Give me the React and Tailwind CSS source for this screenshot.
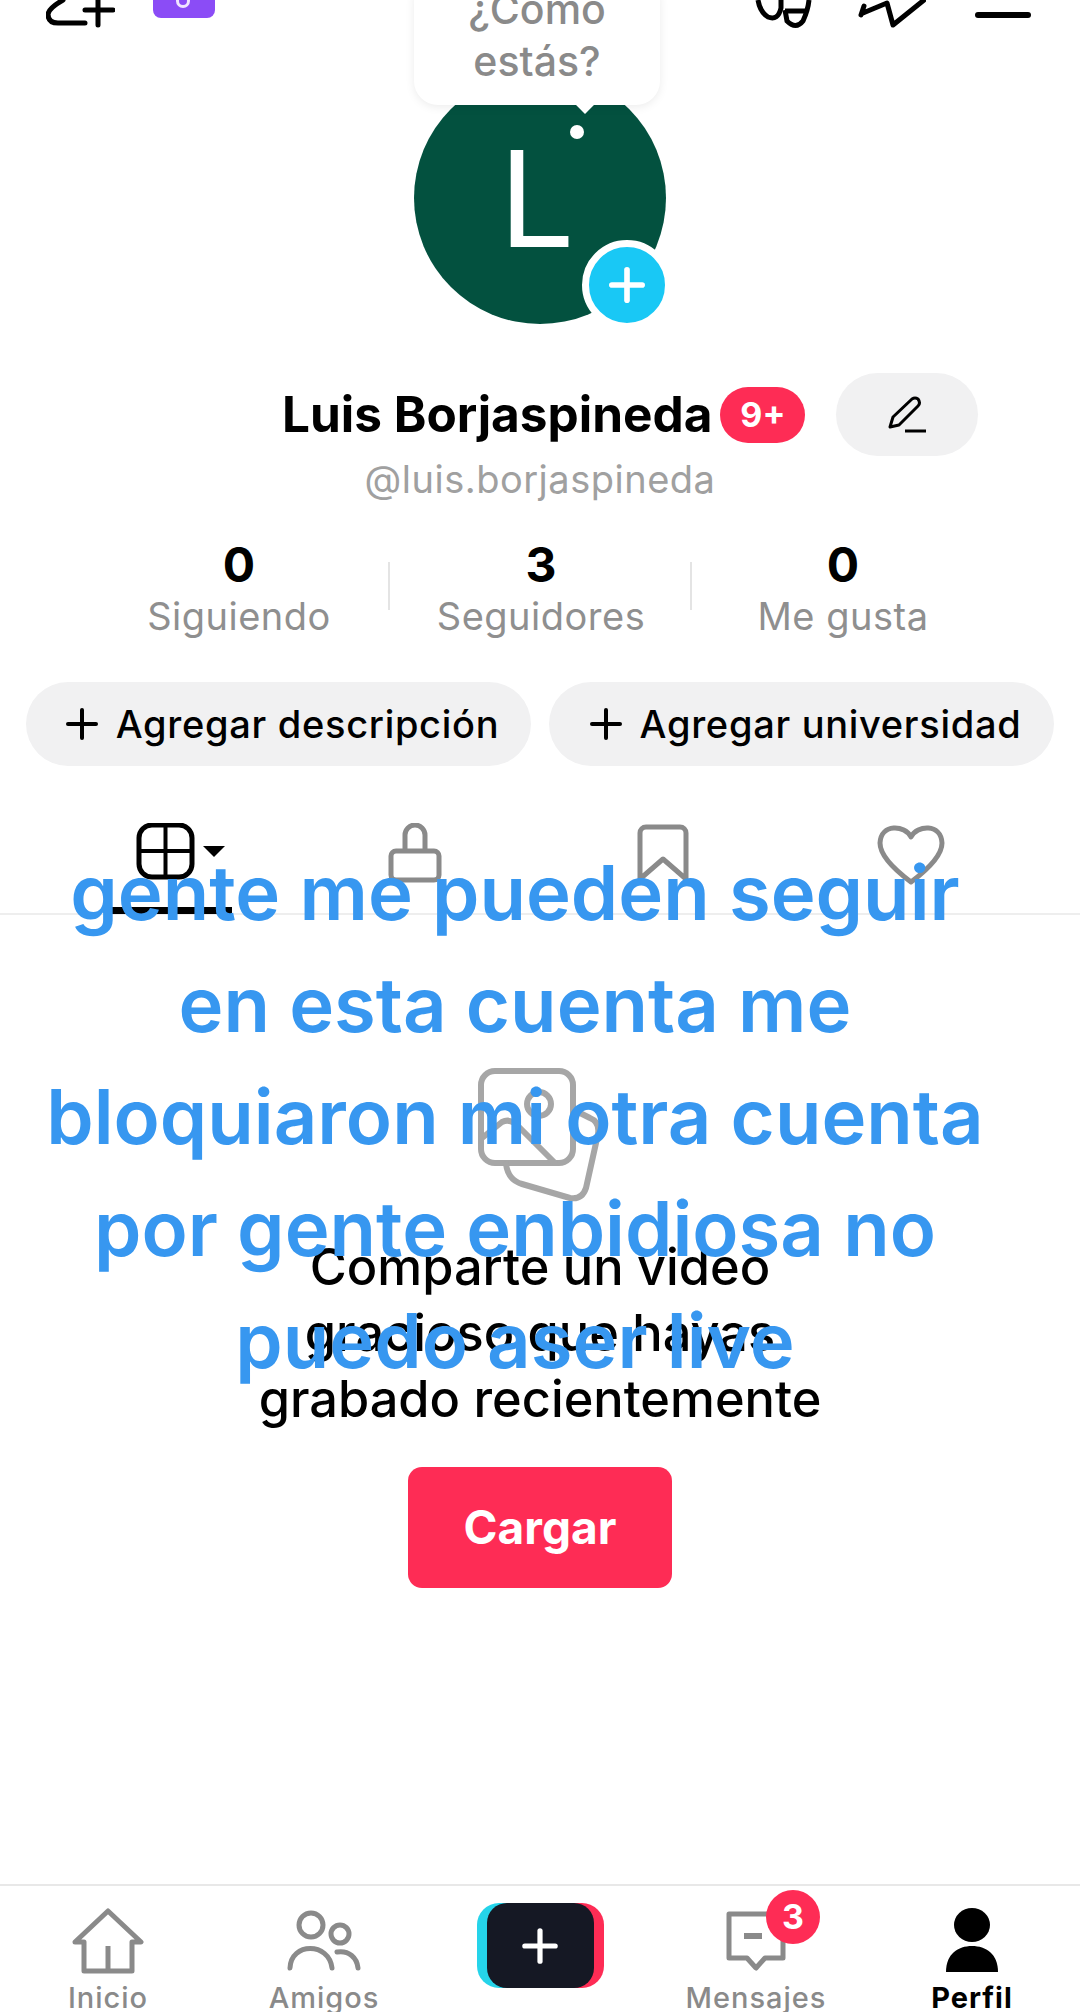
import { Plus } from "lucide-react";

const sans = "font-['Inter','Liberation_Sans',sans-serif]";

const stats = [
  { value: "0", label: "Siguiendo" },
  { value: "3", label: "Seguidores" },
  { value: "0", label: "Me gusta" },
];

const navGray = "#8a8a8a";

const TopIcons = () => (
  <div className="flex h-[40px] justify-between overflow-hidden pl-[46px] pr-[49px]">
    <div className="flex gap-[38px]">
      <svg width="69" height="28" viewBox="0 0 69 28" fill="none" stroke="#000" strokeWidth="5" strokeLinecap="round">
        <path d="M17 0Q3 8 2 14Q2 23 12 23H39" />
        <path d="M52 0V25M39 10H67" />
      </svg>
      <svg width="63" height="20" viewBox="0 0 63 20">
        <path d="M0 0H62V10a8 8 0 0 1-8 8H8a8 8 0 0 1-8-8Z" fill="#8b4cf6" />
        <circle cx="30" cy="1" r="5.5" fill="none" stroke="#f0e5ff" strokeWidth="3" />
      </svg>
    </div>
    <div className="flex">
      <svg width="58" height="30" viewBox="0 0 58 30" fill="none" stroke="#000" strokeWidth="5">
        <path d="M4 0Q6 12 14 17Q24 21 27 8L27 0" />
        <path d="M31 10L33 21Q42 30 49 21Q54 10 55 0" />
        <path d="M31 11H52" />
      </svg>
      <svg className="ml-[46px]" width="68" height="30" viewBox="0 0 68 30" fill="none" stroke="#000" strokeWidth="5" strokeLinejoin="round" strokeLinecap="round">
        <path d="M3 15L6 6M5 13L29 3L35 25L66 0" />
      </svg>
      <div className="ml-[49px] mt-[12px] h-[6px] w-[56px] rounded-full bg-black" />
    </div>
  </div>
);

const Avatar = () => (
  <div className="relative mx-auto mt-[32px] flex h-[252px] w-[252px] items-center justify-center rounded-full bg-[#03513f]">
    <span className="mr-[6px] text-[134px] font-normal leading-none text-white">L</span>
    <div className="absolute -bottom-[6px] -right-[6px] flex h-[90px] w-[90px] items-center justify-center rounded-full border-[7px] border-white bg-[#19c8f5]">
      <Plus size={52} color="#fff" strokeWidth={2.6} />
    </div>
    <div className="absolute left-[156px] top-[53px] h-[14px] w-[14px] rounded-full bg-white" />
  </div>
);

const Bubble = () => (
  <div className="absolute left-[414px] top-[-24px] z-10 flex h-[129px] w-[246px] flex-col items-center justify-end rounded-[24px] bg-white pb-[18px] text-[41px] font-medium leading-[52px] text-[#8a8a8a] shadow-[0_2px_10px_rgba(0,0,0,0.08)]">
    <span>¿Como</span>
    <span>estás?</span>
    <div className="absolute -bottom-[6px] left-[164px] h-[14px] w-[14px] rotate-45 bg-white" />
  </div>
);

const TabIcons = () => (
  <div className="mt-[57px] h-[92px] border-b-2 border-[#eeeeee] pl-[43px] pr-[45px]">
    <div className="grid grid-cols-4">
      <div className="flex justify-center">
        <svg className="ml-[10px]" width="120" height="92" viewBox="0 0 120 92" fill="none" stroke="#000">
          <rect x="27" y="2" width="53" height="52" rx="13" strokeWidth="5" />
          <path d="M53.5 2V54M27 28H80" strokeWidth="4" />
          <path d="M91 23H113L102 34Z" fill="#000" stroke="none" />
          <rect x="0" y="84" width="120" height="7" fill="#000" stroke="none" />
        </svg>
      </div>
      <div className="flex justify-center">
        <svg width="56" height="60" viewBox="0 0 56 60" fill="none" stroke="#8a8a8a" strokeWidth="5">
          <path d="M18 28V12a10 10 0 0 1 20 0V28" />
          <rect x="4" y="28" width="48" height="29" rx="5" />
        </svg>
      </div>
      <div className="flex justify-center">
        <svg width="52" height="60" viewBox="0 0 52 60" fill="none" stroke="#8a8a8a" strokeWidth="5" strokeLinejoin="round">
          <path d="M3 56V10a6 6 0 0 1 6-6H43a6 6 0 0 1 6 6V56L26 36Z" />
        </svg>
      </div>
      <div className="flex justify-center">
        <svg width="68" height="62" viewBox="0 0 68 62" fill="none" stroke="#8a8a8a" strokeWidth="5" strokeLinejoin="round">
          <path d="M34 14C28 2 4 0 3 20C3 34 22 50 34 59C46 50 65 34 65 20C64 0 40 2 34 14Z" />
        </svg>
      </div>
    </div>
  </div>
);

const EmptyIcon = () => (
  <svg className="mx-auto" width="124" height="134" viewBox="0 0 124 134" fill="none" stroke="#a6a6a6" strokeWidth="6" strokeLinejoin="round" strokeLinecap="round">
    <rect x="3" y="3" width="92" height="92" rx="14" />
    <circle cx="61" cy="36" r="12" />
    <path d="M4 70L24 54Q32 50 40 58L76 94" />
    <path d="M28 96Q30 112 44 116L92 130Q104 132 108 120L120 66Q122 54 112 50L96 42" />
  </svg>
);

const NavItem = ({ label, active, children }) => (
  <div className="flex flex-col items-center">
    <div className="flex h-[81px] items-center justify-center">{children}</div>
    <span className={`text-[29px] leading-[34px] tracking-[1px] ${active ? "font-bold text-black" : "font-medium text-[#8a8a8a]"}`}>
      {label}
    </span>
  </div>
);

const BottomNav = () => (
  <div className="absolute inset-x-0 bottom-0 h-[128px] overflow-hidden border-t-2 border-[#e8e8e8] pt-[14px]">
    <div className="grid grid-cols-5">
      <NavItem label="Inicio">
        <svg width="72" height="66" viewBox="0 0 72 66" fill="none" stroke={navGray} strokeWidth="5" strokeLinejoin="round">
          <path d="M36 3L69 34H60V63H12V34H3Z" />
          <path d="M36 38V63" />
        </svg>
      </NavItem>
      <NavItem label="Amigos">
        <svg width="74" height="62" viewBox="0 0 74 62" fill="none" stroke={navGray} strokeWidth="5" strokeLinecap="round">
          <circle cx="24" cy="15" r="12" />
          <circle cx="53" cy="24" r="9" />
          <path d="M3 58C4 32 42 32 45 58" />
          <path d="M50 42C62 40 70 48 71 58" />
        </svg>
      </NavItem>
      <div className="relative mx-auto mt-[3px] h-[85px] w-[127px]">
        <div className="absolute inset-y-0 left-0 w-[60px] rounded-[22px] bg-[#25d4ea]" />
        <div className="absolute inset-y-0 right-0 w-[60px] rounded-[22px] bg-[#fe2c55]" />
        <div className="absolute inset-y-0 left-[10px] right-[10px] flex items-center justify-center rounded-[20px] bg-[#151824]">
          <Plus size={52} color="#fff" strokeWidth={2.4} />
        </div>
      </div>
      <NavItem label="Mensajes">
        <div className="relative h-[66px] w-[60px]">
          <svg width="60" height="66" viewBox="0 0 60 66" fill="none" stroke={navGray} strokeWidth="5" strokeLinejoin="round">
            <path d="M3 6H57V50H39L30 60L21 50H3Z" />
            <path d="M18 28H36" strokeWidth="6" />
          </svg>
          <div className="absolute -top-[18px] left-[40px] flex h-[54px] w-[54px] items-center justify-center rounded-full bg-[#fe2c55] text-[34px] font-bold text-white">
            3
          </div>
        </div>
      </NavItem>
      <NavItem label="Perfil" active>
        <svg width="56" height="66" viewBox="0 0 56 66">
          <ellipse cx="28" cy="17" rx="18" ry="17" fill="#000" />
          <path d="M2 64C2 46 14 38 28 38C42 38 54 46 54 64Z" fill="#000" />
        </svg>
      </NavItem>
    </div>
  </div>
);

export default function App() {
  return (
    <div className={`relative h-[2012px] w-[1080px] overflow-hidden bg-white ${sans}`}>
      <TopIcons />
      <Bubble />
      <Avatar />

      <div className="mt-[49px] flex items-center pl-[282px]">
        <span className="text-[49.5px] font-bold leading-[83px] text-black">Luis Borjaspineda</span>
        <span className="ml-[8px] flex h-[56px] w-[85px] items-center justify-center rounded-full bg-[#fe2c55] text-[34px] font-bold text-white">
          9+
        </span>
        <span className="ml-[31px] flex h-[83px] w-[142px] items-center justify-center rounded-full bg-[#f1f1f2]">
          <svg width="40" height="38" viewBox="0 0 40 38" fill="none" stroke="#000" strokeWidth="3" strokeLinejoin="round">
            <path d="M3 31L6 21L25 3Q28 1 31 3Q34 7 31 10L12 29Z" />
            <path d="M18 35H39" />
          </svg>
        </span>
      </div>

      <p className="mt-[1px] text-center text-[38px] leading-[44px] tracking-[0.5px] text-[#a0a0a0]">@luis.borjaspineda</p>

      <div className="mt-[37px] flex justify-center pl-[2px]">
        {stats.map((s, i) => (
          <div key={s.label} className="relative flex w-[302px] flex-col items-center">
            <span className="text-[48px] font-bold leading-[54px] text-black">{s.value}</span>
            <span className="text-[38px] leading-[48px] tracking-[0.5px] text-[#8f8f8f]">{s.label}</span>
            {i < 2 && <div className="absolute right-0 top-[24px] h-[48px] w-[2px] bg-[#e4e4e4]" />}
          </div>
        ))}
      </div>

      <div className="mt-[42px] flex gap-[18px] pl-[26px] pr-[26px]">
        {["Agregar descripción", "Agregar universidad"].map((t) => (
          <div key={t} className="flex h-[84px] flex-1 items-center justify-center gap-[10px] rounded-full bg-[#f1f1f2]">
            <Plus size={48} color="#000" strokeWidth={2} />
            <span className="text-[38px] font-medium tracking-[0.7px] text-black">{t}</span>
          </div>
        ))}
      </div>

      <TabIcons />

      <div className="mt-[153px]">
        <EmptyIcon />
        <p className="mt-[32px] text-center text-[50.5px] font-medium leading-[66px] text-black">
          Comparte un video
          <br />
          gracioso que hayas
          <br />
          grabado recientemente
        </p>
        <div className="mx-auto mt-[35px] flex h-[121px] w-[264px] items-center justify-center rounded-[14px] bg-[#fe2c55] text-[46px] font-bold text-white">
          Cargar
        </div>
      </div>

      <BottomNav />

      {/* caption laid over the profile */}
      <div className="absolute left-0 top-[836px] z-20 w-[1030px] text-center text-[76px] font-semibold leading-[112px] text-[#3797f0]">
        gente me pueden seguir
        <br />
        en esta cuenta me
        <br />
        bloquiaron mi otra cuenta
        <br />
        por gente enbidiosa no
        <br />
        puedo aser live
      </div>
    </div>
  );
}
